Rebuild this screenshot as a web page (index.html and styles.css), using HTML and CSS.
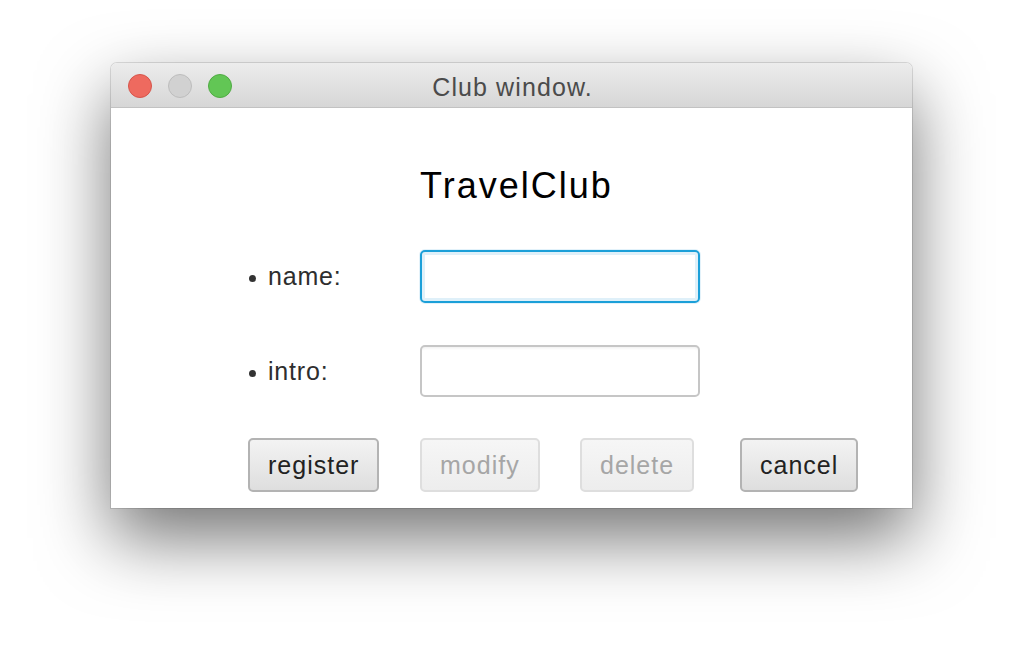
FILE: index.html
```html
<!DOCTYPE html>
<html>
<head>
<meta charset="utf-8">
<link rel="stylesheet" href="styles.css">
</head>
<body>
<div class="window">
  <div class="titlebar">
    <div class="lights">
      <span class="light red"></span>
      <span class="light grey"></span>
      <span class="light green"></span>
    </div>
    <div class="title">Club window.</div>
  </div>
  <div class="content">
    <div class="heading">TravelClub</div>
    <div class="label row-name"><span class="dot"></span>name:</div>
    <div class="field focused row-name"></div>
    <div class="label row-intro"><span class="dot"></span>intro:</div>
    <div class="field row-intro"></div>
    <div class="btn c1">register</div>
    <div class="btn disabled c2">modify</div>
    <div class="btn disabled c3">delete</div>
    <div class="btn c4">cancel</div>
  </div>
</div>
</body>
</html>
```

FILE: styles.css
```css
html, body {
  margin: 0;
  padding: 0;
  background: #ffffff;
}
html { height: 100%; }
body {
  min-height: 100%;
  box-sizing: border-box;
  padding: 63px 0 0 111px;
  font-family: "Liberation Sans", Arial, sans-serif;
}
.window {
  width: 801px;
  height: 445px;
  background: #ffffff;
  border-radius: 6px 6px 0 0;
  box-shadow: 0 0 0 1px rgba(0,0,0,0.12), 0 30px 70px rgba(0,0,0,0.55);
  display: flex;
  flex-direction: column;
  overflow: hidden;
}
.titlebar {
  height: 44px;
  flex: none;
  background: linear-gradient(#ececec, #d6d6d6);
  border-bottom: 1px solid #c2c2c2;
  display: flex;
  align-items: center;
  position: relative;
}
.lights {
  display: flex;
  gap: 16px;
  padding-left: 17px;
  padding-top: 2px;
}
.light {
  width: 22px;
  height: 22px;
  border-radius: 50%;
  display: block;
}
.red { background: #ee6a5f; border: 1px solid #d6554b; }
.grey { background: #d1d1d1; border: 1px solid #bdbdbd; }
.green { background: #62c655; border: 1px solid #50ab43; }
.title {
  position: absolute;
  left: 0;
  right: 0;
  top: 0;
  bottom: 0;
  display: flex;
  align-items: center;
  justify-content: center;
  font-size: 25px;
  letter-spacing: 1.1px;
  color: #4b4b4b;
  padding: 4px 0 0 2px;
}
.content {
  flex: 1;
  padding: 52px 0 0 137px;
  display: grid;
  grid-template-columns: 172px 160px 160px 160px;
  grid-template-rows: 52px 38px 53px 42px 52px 41px 54px;
  align-items: center;
  align-content: start;
}
.heading {
  grid-column: 2 / 5;
  grid-row: 1;
  font-size: 36px;
  letter-spacing: 2px;
  color: #000;
  margin-left: 0;
}
.row-name { grid-row: 3; }
.row-intro { grid-row: 5; }
.label {
  grid-column: 1;
  display: flex;
  align-items: center;
  font-size: 25px;
  letter-spacing: 0.8px;
  color: #2e2e2e;
}
.dot {
  width: 7px;
  height: 7px;
  border-radius: 50%;
  background: #333;
  margin: 4px 12px 0 1px;
  flex: none;
}
.field {
  grid-column: 2 / 4;
  width: 280px;
  height: 100%;
  box-sizing: border-box;
  border: 2px solid #c6c6c6;
  border-radius: 5px;
  background: #fff;
  box-shadow: inset 0 3px 3px -2px rgba(0,0,0,0.07);
}
.field.focused {
  border-color: #1b9fd8;
  box-shadow: inset 0 0 0 3px #dff0f9, 0 0 0 1px #e3f2fa;
}
.btn {
  grid-row: 7;
  height: 100%;
  box-sizing: border-box;
  justify-self: start;
  padding: 0 18px;
  border: 2px solid #b3b3b3;
  border-radius: 5px;
  background: linear-gradient(#f3f3f3, #dedede);
  font-size: 25px;
  letter-spacing: 1px;
  color: #222;
  display: flex;
  align-items: center;
  justify-content: center;
}
.c1 { grid-column: 1; }
.c2 { grid-column: 2; }
.c3 { grid-column: 3; }
.c4 { grid-column: 4; }
.btn.disabled {
  border-color: #dedede;
  background: linear-gradient(#f6f6f6, #ededed);
  color: #a6a6a6;
}
```
